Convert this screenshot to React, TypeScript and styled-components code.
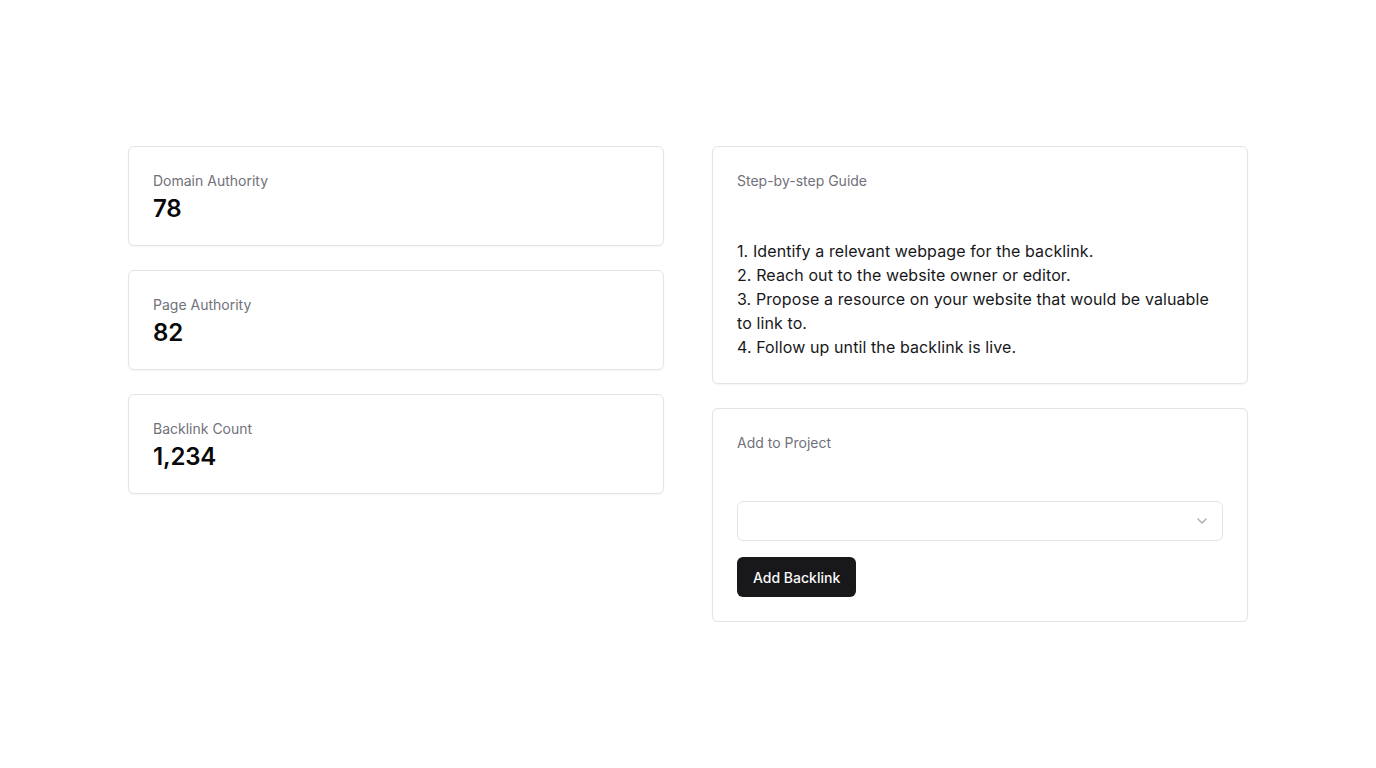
import React from 'react';
import styled, { createGlobalStyle } from 'styled-components';

const GlobalStyle = createGlobalStyle`
	body {
		margin: 0;
		background: #ffffff;
		font-family: Inter, "Noto Sans", sans-serif;
		color: #09090b;
	}
	* {
		box-sizing: border-box;
	}
`

const StyledPage = styled.div`
	display: grid;
	grid-template-columns: 1fr 1fr;
	gap: 48px;
	width: 1120px;
	margin: 0 auto;
	padding-top: 146px;
	align-items: start;
`

const StyledColumn = styled.div`
	display: flex;
	flex-direction: column;
	gap: 24px;
`

const StyledCard = styled.div`
	background: #ffffff;
	border: 1px solid #e4e4e7;
	border-radius: 6px;
	box-shadow: 0 1px 2px rgba(0, 0, 0, 0.05);
	padding: 24px 24px 22px;
`

const StyledLabel = styled.div`
	font-size: 14px;
	line-height: 20px;
	color: #71717a;
`

const StyledValue = styled.div`
	margin-top: 2px;
	margin-bottom: -2px;
	font-size: 24px;
	line-height: 32px;
	font-weight: 600;
	letter-spacing: -0.2px;
	color: #09090b;
`

const StyledBody = styled.div`
	margin-top: 48px;
	padding-bottom: 2px;
	font-size: 16px;
	line-height: 24px;
	letter-spacing: 0.1px;
	color: #18181b;
`

const StyledSelect = styled.div`
	display: flex;
	align-items: center;
	justify-content: flex-end;
	height: 40px;
	padding: 0 12px;
	border: 1px solid #e4e4e7;
	border-radius: 6px;
	color: #71717a;
`

const StyledButton = styled.button`
	margin-top: 16px;
	height: 40px;
	padding: 0 16px;
	border: none;
	border-radius: 6px;
	background: #18181b;
	color: #fafafa;
	font-family: Inter, "Noto Sans", sans-serif;
	font-size: 14px;
	font-weight: 500;
`

const stats = [
	{ label: 'Domain Authority', value: '78' },
	{ label: 'Page Authority', value: '82' },
	{ label: 'Backlink Count', value: '1,234' },
]

const steps = [
	'1. Identify a relevant webpage for the backlink.',
	'2. Reach out to the website owner or editor.',
	'3. Propose a resource on your website that would be valuable to link to.',
	'4. Follow up until the backlink is live.',
]

const Chevron = () => (
	<svg width="16" height="16" viewBox="0 0 24 24" fill="none" stroke="currentColor" strokeWidth="2" strokeLinecap="round" strokeLinejoin="round" style={{ opacity: 0.6 }}>
		<path d="m6 9 6 6 6-6" />
	</svg>
)

const App = () => {
	return <>
		<GlobalStyle />
		<StyledPage>
			<StyledColumn>
				{stats.map(s => (
					<StyledCard key={s.label}>
						<StyledLabel>{s.label}</StyledLabel>
						<StyledValue>{s.value}</StyledValue>
					</StyledCard>
				))}
			</StyledColumn>
			<StyledColumn>
				<StyledCard>
					<StyledLabel>Step-by-step Guide</StyledLabel>
					<StyledBody>
						{steps.map(step => <div key={step}>{step}</div>)}
					</StyledBody>
				</StyledCard>
				<StyledCard>
					<StyledLabel>Add to Project</StyledLabel>
					<StyledBody>
						<StyledSelect>
							<Chevron />
						</StyledSelect>
						<StyledButton>Add Backlink</StyledButton>
					</StyledBody>
				</StyledCard>
			</StyledColumn>
		</StyledPage>
	</>
}

export default App;
